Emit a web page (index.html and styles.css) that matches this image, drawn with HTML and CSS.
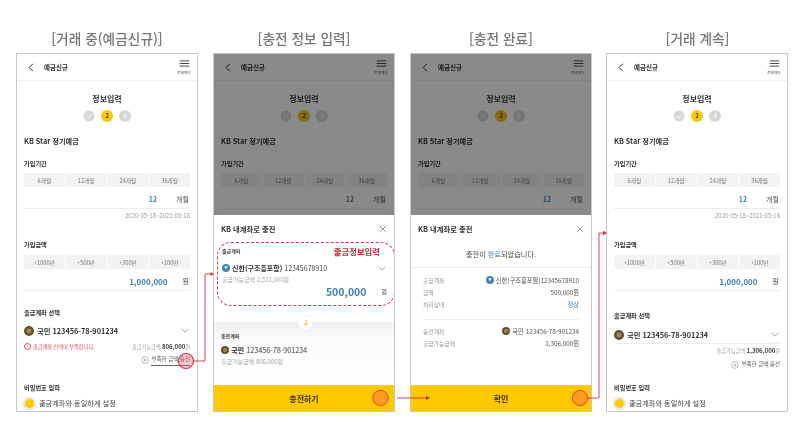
FILE: index.html
```html
<!DOCTYPE html>
<html lang="ko">
<head>
<meta charset="utf-8">
<title>거래 중 충전 안내</title>
<link rel="stylesheet" href="styles.css">
</head>
<body>
<svg class="defs" width="0" height="0" aria-hidden="true">
  <symbol id="back" viewBox="0 0 8 12"><path d="M6.5 1 1.500 6l5 5" fill="none" stroke="#222" stroke-width="1.300"/></symbol>
  <symbol id="menu" viewBox="0 0 12 8"><path d="M.5 1h11M.5 4h11M.5 7h11" stroke="#333" stroke-width="1"/></symbol>
  <symbol id="check" viewBox="0 0 12 12"><circle cx="6" cy="6" r="5.500" fill="#d6d6d6"/><path d="M3.600 6.200 5.300 7.800 8.500 4.500" fill="none" stroke="#fff" stroke-width="1"/></symbol>
  <symbol id="chev" viewBox="0 0 10 6"><path d="M.8 1 5 5 9.200 1" fill="none" stroke="#777" stroke-width=".8"/></symbol>
  <symbol id="coin" viewBox="0 0 10 10"><circle cx="5" cy="5" r="5" fill="#66502f"/><circle cx="5" cy="5" r="2.400" fill="#a28a58"/></symbol>
  <symbol id="shinhan" viewBox="0 0 10 10"><circle cx="5" cy="5" r="5" fill="#3f85b5"/><path d="M2.500 4c2-2 4-1.700 5-.7-1 .3-2 1-2.200 3.700C4.500 5.500 3.500 4.600 2.500 4z" fill="#dcebf5"/></symbol>
  <symbol id="close" viewBox="0 0 10 10"><path d="M1 1l8 8M9 1 1 9" stroke="#666" stroke-width=".8"/></symbol>
  <symbol id="plus" viewBox="0 0 10 10"><circle cx="5" cy="5" r="4.200" fill="#fff" stroke="#777" stroke-width=".6"/><path d="M5 3v4M3 5h4" stroke="#777" stroke-width=".6"/></symbol>
</svg>

<main class="board">
  <section class="col">
    <h2 class="col-title">[거래 중(예금신규)]</h2>
    <div class="phone phone-short">
      <header class="bar">
        <svg class="ic-back"><use href="#back"/></svg><span class="bar-title">예금신규</span>
        <div class="bar-menu"><svg class="ic-menu"><use href="#menu"/></svg><span>전체메뉴</span></div>
      </header>
      <div class="body">
        <h3 class="step-title">정보입력</h3>
        <div class="steps"><svg class="step"><use href="#check"/></svg><span class="step step-on">2</span><span class="step step-off">3</span></div>
        <p class="product">KB Star 정기예금</p>
        <p class="label label-term">가입기간</p>
        <div class="tabs"><span>6개월</span><span>12개월</span><span>24개월</span><span>36개월</span></div>
        <div class="value"><b class="num-sm">12</b><span class="unit-wide">개월</span></div>
        <p class="date">2020-05-18~2021-05-18</p>
        <p class="label label-amount">가입금액</p>
        <div class="tabs tabs-amount"><span>+1000만</span><span>+500만</span><span>+300만</span><span>+100만</span></div>
        <div class="value"><b class="num-lg">1,000,000</b><span class="unit">원</span></div>
        <p class="label label-acct">출금계좌 선택</p>
        <div class="acct"><svg class="coin"><use href="#coin"/></svg><b>국민 123456-78-901234</b><svg class="chev"><use href="#chev"/></svg></div>
        <div class="bal"><span class="err"><i>!</i>출금계좌 잔액이 부족합니다.</span><span>출금가능금액 <b>806,000</b>원</span></div>
        <div class="fill"><svg class="plus"><use href="#plus"/></svg><span class="fill-link">부족한 금액 충전</span></div>
        <p class="label label-pw">비밀번호 입력</p>
        <div class="radio"><span class="dot"></span>출금계좌와 동일하게 설정</div>
      </div>
    </div>
  </section>

  <section class="col">
    <h2 class="col-title">[충전 정보 입력]</h2>
    <div class="phone">
      <div class="dimmed">
        <header class="bar">
          <svg class="ic-back"><use href="#back"/></svg><span class="bar-title">예금신규</span>
          <div class="bar-menu"><svg class="ic-menu"><use href="#menu"/></svg><span>전체메뉴</span></div>
        </header>
        <div class="body">
          <h3 class="step-title">정보입력</h3>
          <div class="steps"><svg class="step"><use href="#check"/></svg><span class="step step-on">2</span><span class="step step-off">3</span></div>
          <p class="product">KB Star 정기예금</p>
          <p class="label label-term">가입기간</p>
          <div class="tabs"><span>6개월</span><span>12개월</span><span>24개월</span><span>36개월</span></div>
          <div class="value"><b class="num-sm">12</b><span class="unit-wide">개월</span></div>
        </div>
      </div>
      <div class="sheet">
        <div class="sheet-head"><b>KB 내계좌로 충전</b><svg class="close"><use href="#close"/></svg></div>
        <div class="from">
          <div class="from-top"><span class="mini">출금계좌</span><b class="note">출금정보입력</b></div>
          <div class="pick"><svg class="coin-sm"><use href="#shinhan"/></svg><span><b>신한(구조흥포함)</b> 12345678910</span><svg class="chev"><use href="#chev"/></svg></div>
          <p class="avail">출금가능금액 2,522,000원</p>
          <div class="from-amt"><b>500,000</b><span>원</span></div>
        </div>
        <div class="to">
          <span class="swap"><svg viewBox="0 0 8 8"><path d="M4 1v5M2.200 4.500 4 6.500l1.800-2" fill="none" stroke="#f0b400" stroke-width=".9"/></svg></span>
          <span class="mini">충전계좌</span>
          <div class="pick"><svg class="coin-sm"><use href="#coin"/></svg><span><b>국민</b> 123456-78-901234</span></div>
          <p class="avail">출금가능금액 806,000원</p>
        </div>
        <div class="cta">충전하기</div>
      </div>
    </div>
  </section>

  <section class="col">
    <h2 class="col-title">[충전 완료]</h2>
    <div class="phone">
      <div class="dimmed">
        <header class="bar">
          <svg class="ic-back"><use href="#back"/></svg><span class="bar-title">예금신규</span>
          <div class="bar-menu"><svg class="ic-menu"><use href="#menu"/></svg><span>전체메뉴</span></div>
        </header>
        <div class="body">
          <h3 class="step-title">정보입력</h3>
          <div class="steps"><svg class="step"><use href="#check"/></svg><span class="step step-on">2</span><span class="step step-off">3</span></div>
          <p class="product">KB Star 정기예금</p>
          <p class="label label-term">가입기간</p>
          <div class="tabs"><span>6개월</span><span>12개월</span><span>24개월</span><span>36개월</span></div>
          <div class="value"><b class="num-sm">12</b><span class="unit-wide">개월</span></div>
        </div>
      </div>
      <div class="sheet">
        <div class="sheet-head"><b>KB 내계좌로 충전</b><svg class="close"><use href="#close"/></svg></div>
        <p class="done">충전이 <em>완료</em>되었습니다.</p>
        <div class="rows">
          <div class="row"><span>출금계좌</span><span class="row-val"><svg class="coin-sm"><use href="#shinhan"/></svg>신한(구조흥포함)12345678910</span></div>
          <div class="row"><span>금액</span><span>500,000원</span></div>
          <div class="row"><span>처리상태</span><em>정상</em></div>
          <div class="row-sep"></div>
          <div class="row"><span>충전계좌</span><span class="row-val"><svg class="coin-sm"><use href="#coin"/></svg>국민 123456-78-901234</span></div>
          <div class="row"><span>출금가능금액</span><span>1,306,000원</span></div>
        </div>
        <div class="cta">확인</div>
      </div>
    </div>
  </section>

  <section class="col col-last">
    <h2 class="col-title">[거래 계속]</h2>
    <div class="phone phone-resume">
      <header class="bar">
        <svg class="ic-back"><use href="#back"/></svg><span class="bar-title">예금신규</span>
        <div class="bar-menu"><svg class="ic-menu"><use href="#menu"/></svg><span>전체메뉴</span></div>
      </header>
      <div class="body">
        <h3 class="step-title">정보입력</h3>
        <div class="steps"><svg class="step"><use href="#check"/></svg><span class="step step-on">2</span><span class="step step-off">3</span></div>
        <p class="product">KB Star 정기예금</p>
        <p class="label label-term">가입기간</p>
        <div class="tabs"><span>6개월</span><span>12개월</span><span>24개월</span><span>36개월</span></div>
        <div class="value"><b class="num-sm">12</b><span class="unit-wide">개월</span></div>
        <p class="date">2020-05-18~2021-05-18</p>
        <p class="label label-amount">가입금액</p>
        <div class="tabs tabs-amount"><span>+1000만</span><span>+500만</span><span>+300만</span><span>+100만</span></div>
        <div class="value"><b class="num-lg">1,000,000</b><span class="unit">원</span></div>
        <p class="label label-acct">출금계좌 선택</p>
        <div class="acct"><svg class="coin"><use href="#coin"/></svg><b>국민 123456-78-901234</b><svg class="chev"><use href="#chev"/></svg></div>
        <div class="bal bal-end"><span>출금가능금액 <b>1,306,000</b>원</span></div>
        <div class="fill"><svg class="plus"><use href="#plus"/></svg><span class="fill-link">부족한 금액 충전</span></div>
        <p class="label label-pw">비밀번호 입력</p>
        <div class="radio"><span class="dot"></span>출금계좌와 동일하게 설정</div>
      </div>
    </div>
  </section>

  <svg class="flow" viewBox="0 0 800 429" aria-hidden="true">
    <g fill="none" stroke="#cf3340" stroke-width=".9">
      <path d="M194 361H205V274H212"/>
      <path d="M397 398H428"/>
      <path d="M588 398H599V233H604"/>
    </g>
    <g fill="#cf3340">
      <path d="M214 274l-3.500-2v4z"/>
      <path d="M430 397.800l-4-2.300v4.600z"/>
      <path d="M607 233l-4-2.300v4.600z"/>
    </g>
    <circle cx="186" cy="361" r="7.500" fill="#e8485a" fill-opacity=".3" stroke="#cf3340" stroke-width="1.100"/>
    <circle cx="380.500" cy="398" r="7.700" fill="#ff9a1e" stroke="#d8402a" stroke-width=".9"/>
    <circle cx="580" cy="398" r="7.700" fill="#ff9a1e" stroke="#d8402a" stroke-width=".9"/>
  </svg>
</main>
</body>
</html>
```
FILE: styles.css
```css
* { box-sizing: border-box; margin: 0; padding: 0; }
html, body { background: #fff; }
body {
  width: 800px;
  height: 429px;
  overflow: hidden;
  font-family: "Noto Sans CJK KR", "Noto Sans", sans-serif;
  color: #333;
}
.defs { display: block; position: absolute; }
.board {
  position: relative;
  display: grid;
  grid-template-columns: repeat(4, 182px);
  column-gap: 15px;
  padding: 28px 0 0 16px;
  height: 429px;
  filter: blur(.4px);
}
.col-last { margin-left: -1px; }
.col-title {
  height: 25px;
  font-size: 13.700px;
  line-height: 21px;
  font-weight: 500;
  color: #777;
  text-align: center;
  white-space: nowrap;
}
.phone {
  display: flex;
  flex-direction: column;
  width: 182px;
  height: 359px;
  border: 1px solid #c8c8c8;
  background: #fff;
  overflow: hidden;
}

/* header bar */
.bar {
  flex: none;
  display: flex;
  align-items: center;
  height: 27px;
  padding: 0 6px 0 11px;
  border-bottom: 1px solid #f0f0f0;
}
.ic-back { width: 6px; height: 9px; margin-right: 10px; }
.bar-title { font-size: 6.500px; font-weight: 700; color: #333; }
.bar-menu {
  margin-left: auto;
  display: flex;
  flex-direction: column;
  align-items: center;
  font-size: 3.800px;
  line-height: 6px;
  color: #555;
}
.ic-menu { width: 11px; height: 7px; margin: 2px 0 3px; }

/* form */
.body { padding: 0 7px; }
.step-title { margin-top: 12px; font-size: 8px; line-height: 12px; font-weight: 700; text-align: center; color: #333; }
.steps { display: flex; justify-content: center; gap: 6px; margin-top: 5px; height: 12px; }
.step { width: 12px; height: 12px; border-radius: 50%; display: flex; align-items: center; justify-content: center; font-size: 5.500px; font-weight: 700; }
.step-on { background: #f6c713; color: #4d3d00; }
.step-off { background: #d6d6d6; color: #fff; }
.product { margin-top: 14px; font-size: 7.200px; line-height: 10px; font-weight: 700; color: #333; }
.label { font-size: 6.200px; line-height: 10px; font-weight: 700; color: #333; }
.label-term { margin-top: 13px; }
.label-amount { margin-top: 20px; }
.label-acct { margin-top: 17px; }
.label-pw { margin-top: 16px; }
.tabs { display: grid; grid-template-columns: repeat(4, 1fr); gap: 1px; margin-top: 4px; height: 14px; }
.tabs-amount { margin-top: 5px; }
.tabs span { display: flex; align-items: center; justify-content: center; background: #f3f3f3; font-size: 5.700px; color: #777; }
.value {
  display: flex;
  align-items: center;
  justify-content: flex-end;
  height: 22px;
  padding: 3px 1px 0 0;
  border-bottom: 1px solid #ececec;
}
.num-sm { font-size: 7px; font-weight: 700; color: #3f80b8; }
.unit-wide { margin-left: 19px; font-size: 7px; color: #555; }
.num-lg { font-size: 8px; font-weight: 700; color: #3f80b8; }
.unit { margin-left: 15px; font-size: 7px; color: #555; }
.date { margin-top: 3px; font-size: 6px; line-height: 8px; color: #999; text-align: right; }
.acct { display: flex; align-items: center; height: 17px; margin-top: 4px; }
.acct b { font-size: 7.300px; font-weight: 700; color: #333; }
.coin { width: 10px; height: 10px; margin-right: 3px; flex: none; }
.chev { width: 8px; height: 5px; margin-left: auto; margin-right: 1px; flex: none; }
.bal { display: flex; justify-content: space-between; align-items: center; height: 10px; margin-top: 2px; font-size: 5.200px; color: #999; }
.bal b { font-size: 6px; font-weight: 700; color: #444; }
.bal-end { justify-content: flex-end; }
.err { display: flex; align-items: center; color: #e2455a; }
.err i { display: flex; align-items: center; justify-content: center; width: 7px; height: 7px; margin-right: 2px; border: .6px solid #e2455a; border-radius: 50%; font-size: 4px; font-style: normal; }
.fill { display: flex; justify-content: flex-end; align-items: flex-start; margin-top: 3px; height: 13px; }
.plus { width: 8px; height: 8px; margin: 2px 2px 0 0; }
.fill-link { display: block; height: 12px; font-size: 5.500px; line-height: 11px; color: #555; }
.phone-short .fill-link { border-bottom: 1px solid #666; }
.radio { display: flex; align-items: center; height: 14px; margin-top: 3px; font-size: 7.200px; color: #444; }
.dot { width: 11px; height: 11px; margin-right: 4px; border-radius: 50%; background: #fc0; border: 1.500px solid #ececec; outline: .5px solid #ddd; }

/* resumed state sits a little lower */
.phone-resume .label-acct { margin-top: 20px; }
.phone-resume .acct { border-bottom: 1px solid #ececec; height: 18px; margin-top: 5px; }
.phone-resume .bal { margin-top: 1px; }
.phone-resume .fill { margin-top: 4px; }
.phone-resume .label-pw { margin-top: 11px; }

/* dim + sheet */
.dimmed { position: relative; height: 161px; flex: none; overflow: hidden; }
.dimmed::after { content: ""; position: absolute; inset: 0; background: rgba(0, 0, 0, .46); }
.sheet { flex: 1; display: flex; flex-direction: column; min-height: 0; }
.sheet-head { flex: none; display: flex; align-items: center; justify-content: space-between; height: 27px; padding: 0 7px; }
.sheet-head b { font-size: 7.300px; font-weight: 700; color: #333; }
.close { width: 8px; height: 8px; }
.from {
  flex: none;
  height: 64px;
  margin: 0 -1px 0 3px;
  padding: 3px 7px 0 4px;
  border: 1px dashed #d2364a;
  border-radius: 14px;
}
.from-top { display: flex; justify-content: space-between; align-items: center; height: 10px; }
.mini { display: block; font-size: 5px; line-height: 8px; font-weight: 700; color: #444; }
.note { margin-right: 7px; font-size: 8.400px; font-weight: 700; color: #d2273c; }
.pick { display: flex; align-items: center; height: 12px; margin-top: 6px; font-size: 7px; color: #444; }
.pick b { font-weight: 700; color: #333; }
.coin-sm { width: 8px; height: 8px; margin-right: 2px; flex: none; }
.avail { margin-top: 2px; font-size: 6px; line-height: 8px; color: #aaa; }
.from-amt { display: flex; justify-content: flex-end; align-items: center; height: 14px; }
.from-amt b { font-size: 10.500px; font-weight: 700; color: #3f80b8; }
.from-amt span { margin-left: 15px; font-size: 6px; color: #555; }
.to {
  position: relative;
  flex: 1;
  margin-top: 16px;
  padding: 10px 7px 0;
  background: linear-gradient(#f0f0f0, #fbfbfb 30%, #fff);
}
.to .pick { margin-top: 4px; font-size: 7.200px; }
.swap { position: absolute; left: 84px; top: -7px; display: flex; align-items: center; justify-content: center; width: 15px; height: 15px; border-radius: 50%; background: #fff; box-shadow: 0 0 2px rgba(0, 0, 0, .12); }
.swap svg { width: 8px; height: 8px; }
.cta { flex: none; display: flex; align-items: center; justify-content: center; height: 26px; background: #ffc800; font-size: 8px; font-weight: 700; color: #3a3000; }
.done { flex: none; height: 26px; padding-top: 6px; text-align: center; font-size: 7.200px; line-height: 12px; color: #444; border-bottom: 1px solid #ececec; }
em { font-style: normal; color: #3f80b8; }
.rows { flex: 1; padding: 6px 12px 0 12px; }
.row { display: flex; justify-content: space-between; align-items: center; height: 12px; font-size: 6.300px; color: #555; }
.row > span:first-child { color: #999; font-size: 5.800px; }
.row-val { display: flex; align-items: center; }
.row-sep { height: 1px; margin: 9px 0 5px; background: #ececec; }

/* annotation overlay */
.flow { position: absolute; inset: 0; width: 800px; height: 429px; pointer-events: none; }
```
